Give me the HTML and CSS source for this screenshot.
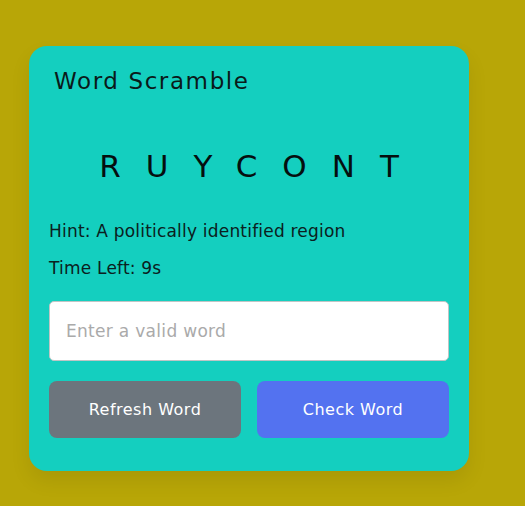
FILE: index.html
```html
<!DOCTYPE html>
<html lang="en">
<head>
<meta charset="utf-8">
<title>Word Scramble</title>
<link rel="stylesheet" href="styles.css">
</head>
<body>
  <div class="card">
    <h2 class="title">Word Scramble</h2>
    <div class="content">
      <p class="word">RUYCONT</p>
      <div class="details">
        <p class="hint">Hint: <span>A politically identified region</span></p>
        <p class="time">Time Left: <span>9s</span></p>
      </div>
      <input class="guess" type="text" placeholder="Enter a valid word" spellcheck="false">
      <div class="buttons">
        <button class="btn refresh">Refresh Word</button>
        <button class="btn check">Check Word</button>
      </div>
    </div>
  </div>
</body>
</html>
```
FILE: styles.css
```css
* { box-sizing: border-box; }
body {
  margin: 0;
  min-height: 506px;
  background: #b8a607;
  font-family: "DejaVu Sans", "Open Sans", sans-serif;
  padding: 46px 0 0 29px;
}
.card {
  width: 440px;
  height: 425px;
  background: #14cfbf;
  border-radius: 18px;
  box-shadow: 0 10px 20px rgba(0,0,0,0.08);
  display: flex;
  flex-direction: column;
}
.title {
  margin: 0;
  padding: 20px 25px 0 25px;
  font-size: 23px;
  font-weight: 400;
  letter-spacing: 1.6px;
  color: #0a1a1a;
  line-height: 30px;
}
.content {
  padding: 0 20px;
  display: flex;
  flex-direction: column;
}
.word {
  margin: 50px 0 0 0;
  text-align: center;
  font-size: 31px;
  line-height: 40px;
  letter-spacing: 25px;
  text-indent: 25px;
  color: #050f0f;
}
.details { margin-top: 34px; color: #0b2020; }
.details p { margin: 0; font-size: 17px; line-height: 22px; letter-spacing: 0.2px; }
.details .time { margin-top: 15px; }
.guess {
  margin-top: 22px;
  height: 60px;
  width: 100%;
  border: 1px solid #bfc5c5;
  border-radius: 5px;
  padding: 0 16px;
  font-size: 17px;
  letter-spacing: 0.3px;
  font-family: inherit;
  background: #fff;
  outline: none;
}
.guess::placeholder { color: #aaa; }
.buttons {
  margin-top: 20px;
  display: grid;
  grid-template-columns: 1fr 1fr;
  gap: 16px;
}
.btn {
  height: 57px;
  border: none;
  border-radius: 8px;
  color: #fff;
  font-family: inherit;
  font-size: 16px;
  letter-spacing: 0.5px;
  font-weight: 500;
}
.refresh { background: #6c757d; }
.check { background: #5372f0; }
```
